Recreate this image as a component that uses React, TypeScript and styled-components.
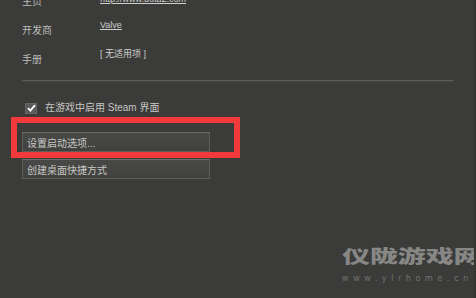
import React from "react";
import styled, { createGlobalStyle } from "styled-components";

const Global = createGlobalStyle`
  html, body { margin: 0; padding: 0; background: #3a3a38; }
  body { font-family: "Liberation Sans", "Noto Sans CJK SC", sans-serif; }
`;

const Page = styled.div`
  position: relative;
  width: 476px;
  height: 298px;
  overflow: hidden;
  background: #3b3b39;
  box-sizing: border-box;
  padding: 0 20px 0 22px;
  display: flex;
  flex-direction: column;
  border-right: 2px solid #343432;
`;

const InfoList = styled.div`
  display: flex;
  flex-direction: column;
  margin-top: -12px;
`;

const Row = styled.div`
  display: flex;
  height: 29px;
`;

const Label = styled.div`
  width: 78px;
  margin-top: 8px;
  font-size: 10px;
  line-height: 12px;
  color: #bdbdbb;
`;

const Value = styled.div<{ $link?: boolean; $offset?: number }>`
  margin-top: ${(p) => p.$offset ?? 2}px;
  font-size: 9px;
  line-height: 12px;
  color: #cfcfcd;
  text-decoration: ${(p) => (p.$link ? "underline" : "none")};
`;

const Divider = styled.div`
  margin-top: 5px;
  height: 1px;
  background: #5c5c5a;
  border-bottom: 1px solid #444442;
`;

const CheckRow = styled.div`
  display: flex;
  align-items: center;
  gap: 8px;
  margin-top: 20px;
  margin-left: 3px;
`;

const Box = styled.div`
  width: 12px;
  height: 11px;
  background: #5a5a58;
  border: 1px solid #666;
  box-sizing: border-box;
  display: flex;
  align-items: center;
  justify-content: center;
`;

const CheckText = styled.span`
  font-size: 10px;
  line-height: 12px;
  color: #c6c6c4;
`;

const Buttons = styled.div`
  display: flex;
  flex-direction: column;
  gap: 7px;
  margin-top: 18px;
`;

const Button = styled.div`
  width: 188px;
  height: 20px;
  box-sizing: border-box;
  background: linear-gradient(#484846, #41413f);
  border: 1px solid #5e5e5c;
  border-top-color: #6a6a68;
  display: flex;
  align-items: center;
  padding-left: 4px;
  font-size: 10px;
  color: #c8c8c6;
`;

const Highlight = styled.div`
  position: absolute;
  left: 11px;
  top: 117px;
  width: 229px;
  height: 41px;
  box-sizing: border-box;
  border: 6px solid #f23a3a;
  pointer-events: none;
`;

const Watermark = styled.div`
  position: absolute;
  left: 342px;
  top: 245px;
  display: flex;
  flex-direction: column;
  gap: 10px;
`;

const MarkTitle = styled.div`
  font-family: "Noto Sans CJK SC", sans-serif;
  font-weight: 900;
  font-size: 18px;
  line-height: 20px;
  color: #878785;
  transform: scaleX(1.55);
  transform-origin: left center;
  white-space: nowrap;
`;

const MarkUrl = styled.div`
  font-family: "DejaVu Sans", sans-serif;
  font-size: 8px;
  line-height: 8px;
  letter-spacing: 4.6px;
  color: #737371;
  white-space: nowrap;
`;

export default function App() {
  return (
    <>
      <Global />
      <Page>
        <InfoList>
          <Row>
            <Label>主页</Label>
            <Value $link $offset={5}>http://www.dota2.com</Value>
          </Row>
          <Row>
            <Label>开发商</Label>
            <Value $link>Valve</Value>
          </Row>
          <Row>
            <Label>手册</Label>
            <Value>[ 无适用项 ]</Value>
          </Row>
        </InfoList>
        <Divider />
        <CheckRow>
          <Box>
            <svg width="9" height="8" viewBox="0 0 9 8">
              <path d="M1 4.2 L3.4 6.6 L8 1.2" stroke="#fff" strokeWidth="1.8" fill="none" />
            </svg>
          </Box>
          <CheckText>在游戏中启用 Steam 界面</CheckText>
        </CheckRow>
        <Buttons>
          <Button>设置启动选项...</Button>
          <Button>创建桌面快捷方式</Button>
        </Buttons>
        <Highlight />
        <Watermark>
          <MarkTitle>仪陇游戏网</MarkTitle>
          <MarkUrl>www.ylrhome.cn</MarkUrl>
        </Watermark>
      </Page>
    </>
  );
}
